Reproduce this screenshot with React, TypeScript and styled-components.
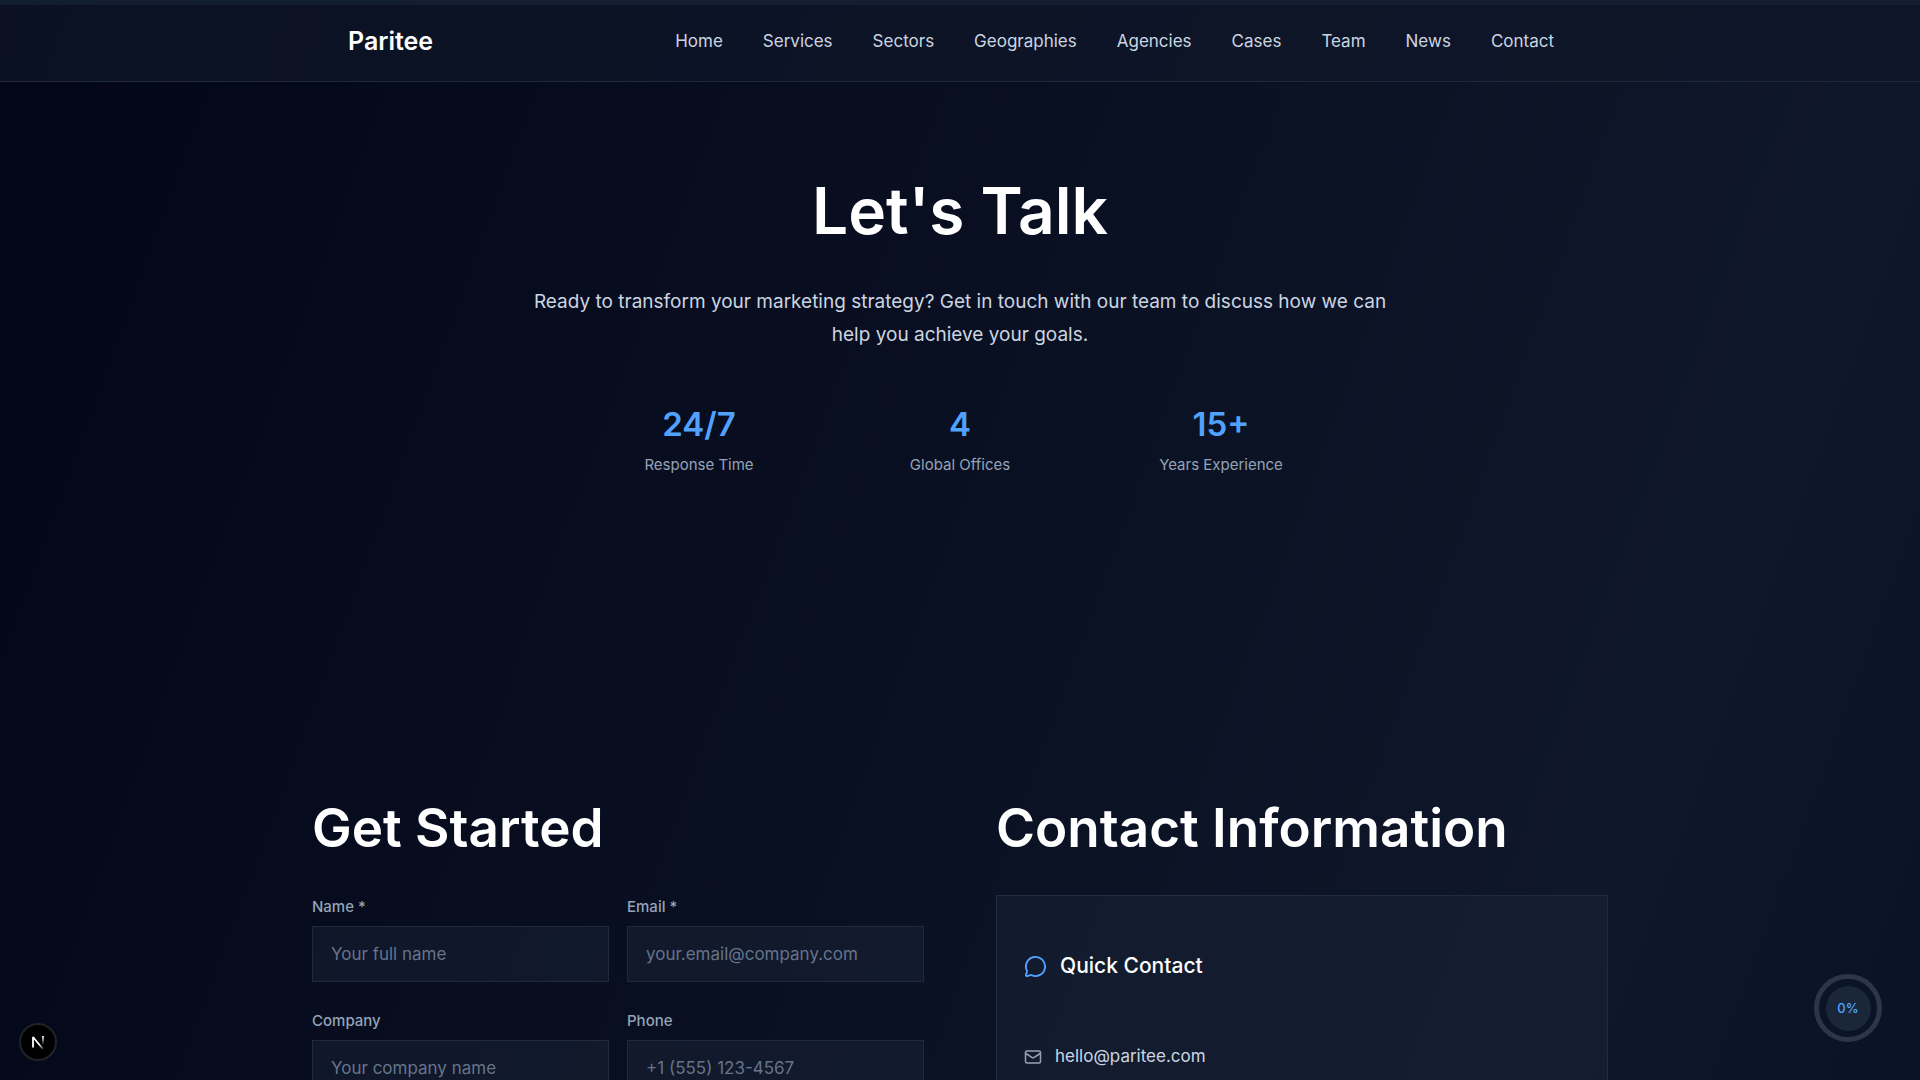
import React from "react";
import styled, { createGlobalStyle } from "styled-components";
import { Mail, MessageCircle } from "lucide-react";

const GlobalStyle = createGlobalStyle`
  *, *::before, *::after { box-sizing: border-box; }
  html { font-size: 18px; }
  body {
    margin: 0;
    color: #fff;
    font-family: Inter, "Liberation Sans", sans-serif;
    background: #020617;
    overflow: hidden;
  }
`;

const Page = styled.div`
  height: 100vh;
  overflow: hidden;
  background: linear-gradient(110deg, #020617 0%, #0f172a 83%, #0a1225 100%);
`;

const ProgressTrack = styled.div`
  height: 5px;
  background: #131e30;
`;

const Header = styled.header`
  height: 77px;
  background: rgba(15, 23, 42, 0.7);
  border-bottom: 1px solid #1e293b;
`;

const HeaderInner = styled.div`
  max-width: 1296px;
  margin: 0 auto;
  padding: 18px 54px 0 36px;
  display: flex;
  justify-content: space-between;
  align-items: center;
`;

const Logo = styled.a`
  color: #fff;
  font-size: 25px;
  line-height: 36px;
  font-weight: 600;
  text-decoration: none;
`;

const Nav = styled.nav`
  display: flex;
  gap: 40px;
`;

const NavLink = styled.a`
  color: #cbd5e1;
  font-size: 17px;
  line-height: 27px;
  text-decoration: none;
`;

const Hero = styled.section`
  display: flex;
  flex-direction: column;
  align-items: center;
  padding-top: 90px;
  text-align: center;
`;

const HeroTitle = styled.h1`
  margin: 0;
  font-size: 64px;
  line-height: 77px;
  font-weight: 600;
`;

const HeroText = styled.p`
  max-width: 864px;
  margin: 36px 0 0;
  color: #cbd5e1;
  font-size: 19px;
  line-height: 33px;
`;

const Stats = styled.dl`
  display: grid;
  grid-template-columns: repeat(3, 225px);
  gap: 36px;
  margin: 53px 0 0;
`;

const Stat = styled.div`
  display: flex;
  flex-direction: column-reverse;
`;

const StatLabel = styled.dt`
  margin-top: 9px;
  color: #94a3b8;
  font-size: 15px;
  line-height: 23px;
`;

const StatValue = styled.dd`
  margin: 0;
  color: #51a2ff;
  font-size: 33px;
  line-height: 40px;
  font-weight: 600;
`;

const Columns = styled.main`
  display: grid;
  grid-template-columns: 1fr 1fr;
  gap: 72px;
  max-width: 1296px;
  margin: 321px auto 0;
`;

const SectionTitle = styled.h2`
  margin: 0 0 36px;
  font-size: 53px;
  line-height: 62px;
  font-weight: 600;
`;

const FieldGrid = styled.form`
  display: grid;
  grid-template-columns: 1fr 1fr;
  gap: 27px 18px;
`;

const Field = styled.label`
  display: flex;
  flex-direction: column;
  gap: 8px;
  color: #94a3b8;
  font-size: 15px;
  line-height: 23px;
  font-weight: 500;
`;

const TextInput = styled.input`
  width: 100%;
  height: 56px;
  padding: 0 18px;
  border: 1px solid #1f2b3c;
  border-radius: 0;
  background: rgba(30, 41, 59, 0.4);
  color: #fff;
  font: 400 17px Inter, "Liberation Sans", sans-serif;
  &::placeholder { color: #64748b; opacity: 1; }
`;

const Card = styled.div`
  display: flex;
  flex-direction: column;
  gap: 61px;
  padding: 54px 27px;
  border: 1px solid #1f2d40;
  background: rgba(30, 41, 59, 0.4);
`;

const CardTitle = styled.h3`
  display: flex;
  align-items: center;
  gap: 13px;
  margin: 0;
  font-size: 21px;
  line-height: 32px;
  font-weight: 500;
  svg { color: #51a2ff; }
`;

const ContactLink = styled.a`
  display: flex;
  align-items: center;
  gap: 13px;
  color: #cbd5e1;
  font-size: 17px;
  line-height: 27px;
  text-decoration: none;
  svg { color: #94a3b8; }
`;

const ScrollBadge = styled.div`
  position: fixed;
  right: 38px;
  bottom: 38px;
  display: grid;
  place-items: center;
  width: 68px;
  height: 68px;
  border: 5px solid #2a374a;
  border-radius: 50%;
`;

const ScrollValue = styled.span`
  display: grid;
  place-items: center;
  width: 45px;
  height: 45px;
  border-radius: 50%;
  background: #1a273a;
  color: #51a2ff;
  font-size: 13px;
  font-weight: 500;
`;

const DevButton = styled.button`
  position: fixed;
  left: 19px;
  bottom: 19px;
  display: grid;
  place-items: center;
  width: 38px;
  height: 38px;
  padding: 0;
  border: 2px solid #222327;
  border-radius: 50%;
  background: #000;
`;

const navItems = ["Home", "Services", "Sectors", "Geographies", "Agencies", "Cases", "Team", "News", "Contact"];

const stats = [
  { value: "24/7", label: "Response Time" },
  { value: "4", label: "Global Offices" },
  { value: "15+", label: "Years Experience" },
];

const fields = [
  { label: "Name *", type: "text", placeholder: "Your full name" },
  { label: "Email *", type: "email", placeholder: "your.email@company.com" },
  { label: "Company", type: "text", placeholder: "Your company name" },
  { label: "Phone", type: "tel", placeholder: "+1 (555) 123-4567" },
];

function NextMark() {
  return (
    <svg width="14" height="14" viewBox="0 0 14 14" fill="none" aria-hidden="true">
      <defs>
        <linearGradient id="stem" x1="0" y1="1" x2="0" y2="10" gradientUnits="userSpaceOnUse">
          <stop stopColor="#fff" />
          <stop offset="1" stopColor="#fff" stopOpacity="0" />
        </linearGradient>
        <linearGradient id="slash" x1="8" y1="9" x2="12" y2="14" gradientUnits="userSpaceOnUse">
          <stop stopColor="#fff" />
          <stop offset="1" stopColor="#fff" stopOpacity="0.2" />
        </linearGradient>
      </defs>
      <path d="M2 12.500V2L12 14" stroke="url(#slash)" strokeWidth="1.800" strokeLinejoin="bevel" />
      <path d="M12 1V10" stroke="url(#stem)" strokeWidth="1.800" />
    </svg>
  );
}

export default function App() {
  return (
    <Page>
      <GlobalStyle />
      <ProgressTrack />
      <Header>
        <HeaderInner>
          <Logo href="#home">Paritee</Logo>
          <Nav>
            {navItems.map((item) => (
              <NavLink key={item} href={`#${item.toLowerCase()}`}>{item}</NavLink>
            ))}
          </Nav>
        </HeaderInner>
      </Header>
      <Hero>
        <HeroTitle>Let's Talk</HeroTitle>
        <HeroText>
          Ready to transform your marketing strategy? Get in touch with our team to discuss how we can help you
          achieve your goals.
        </HeroText>
        <Stats>
          {stats.map((stat) => (
            <Stat key={stat.label}>
              <StatLabel>{stat.label}</StatLabel>
              <StatValue>{stat.value}</StatValue>
            </Stat>
          ))}
        </Stats>
      </Hero>
      <Columns>
        <section>
          <SectionTitle>Get Started</SectionTitle>
          <FieldGrid>
            {fields.map((field) => (
              <Field key={field.label}>
                {field.label}
                <TextInput type={field.type} placeholder={field.placeholder} />
              </Field>
            ))}
          </FieldGrid>
        </section>
        <section>
          <SectionTitle>Contact Information</SectionTitle>
          <Card>
            <CardTitle>
              <MessageCircle size={23} />
              Quick Contact
            </CardTitle>
            <ContactLink href="mailto:hello@paritee.com">
              <Mail size={18} />
              hello@paritee.com
            </ContactLink>
          </Card>
        </section>
      </Columns>
      <ScrollBadge>
        <ScrollValue>0%</ScrollValue>
      </ScrollBadge>
      <DevButton type="button" aria-label="Open developer tools">
        <NextMark />
      </DevButton>
    </Page>
  );
}
